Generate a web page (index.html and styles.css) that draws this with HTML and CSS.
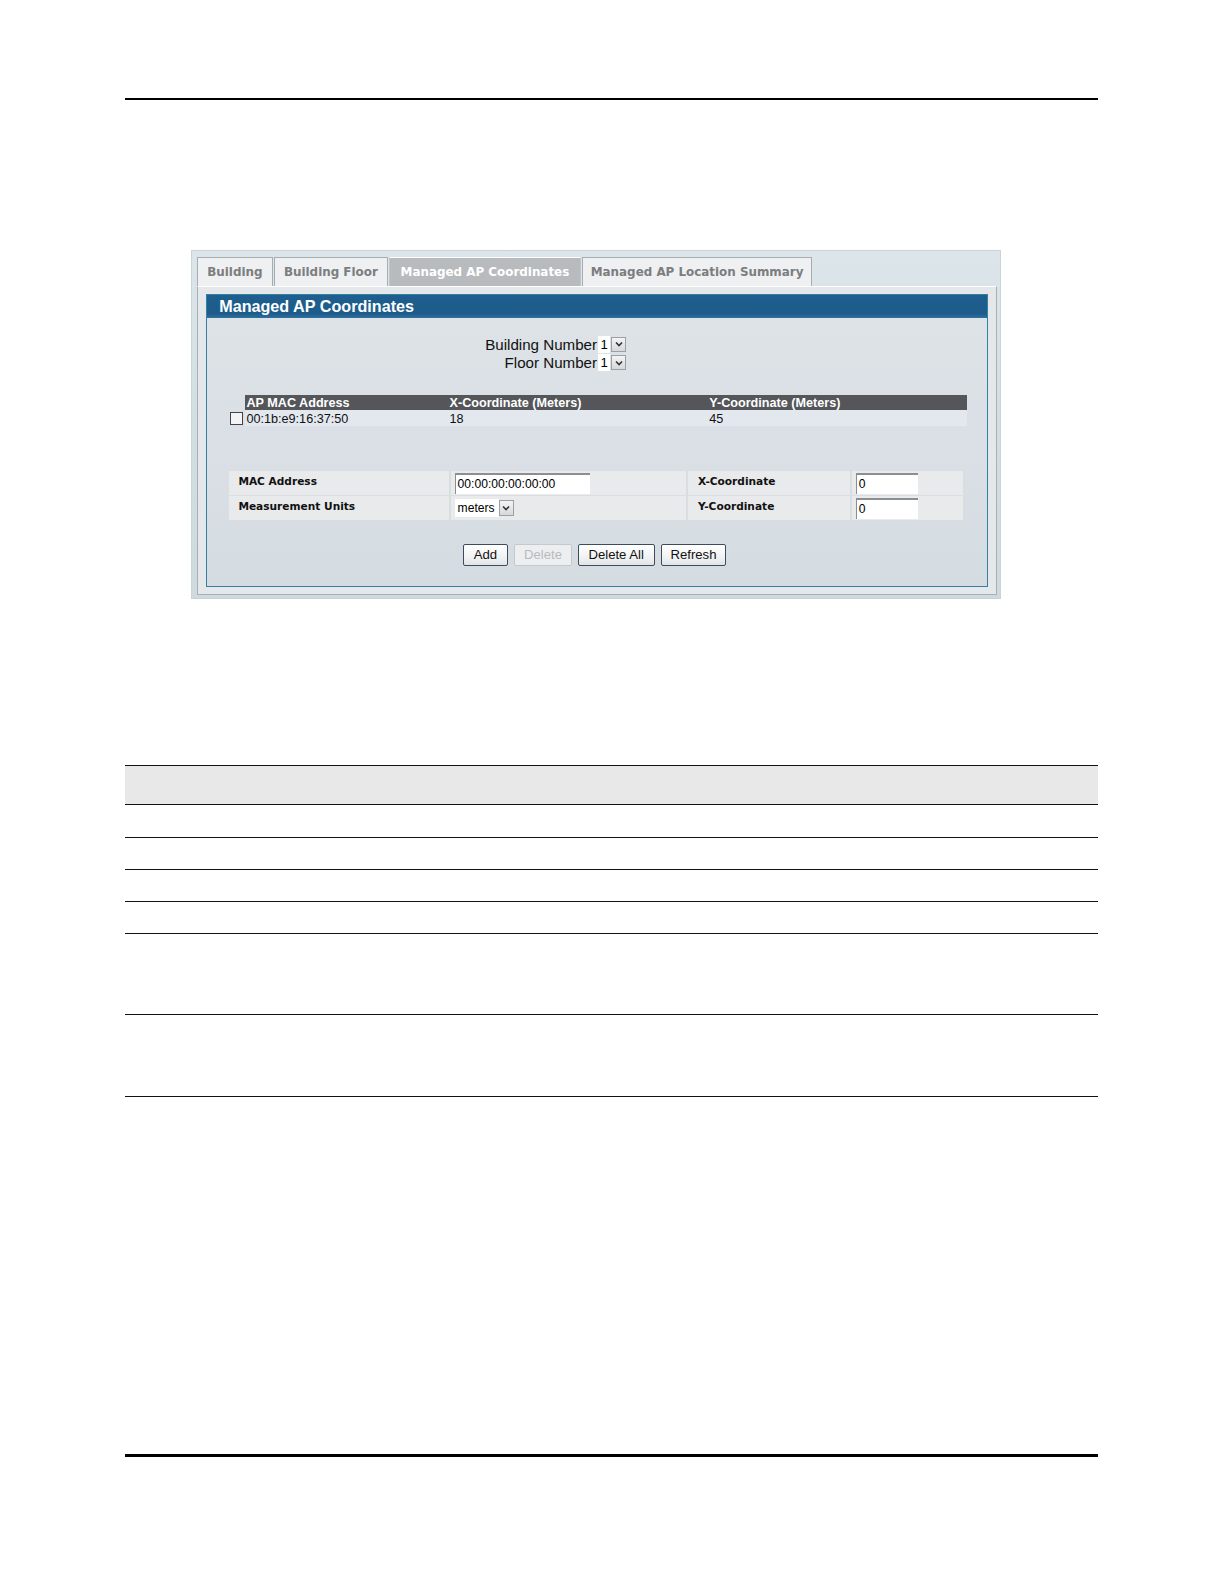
FILE: index.html
```html
<!DOCTYPE html>
<html>
<head>
<meta charset="utf-8">
<link rel="stylesheet" href="styles.css">
</head>
<body>
<div class="page">
  <div class="rule-top"></div>

  <div class="shot">
    <div class="tabs">
      <div class="tab t1">Building</div>
      <div class="tab t2">Building Floor</div>
      <div class="tab t3 active">Managed AP Coordinates</div>
      <div class="tab t4">Managed AP Location Summary</div>
    </div>
    <div class="content">
      <div class="panel">
        <div class="panel-head">Managed AP Coordinates</div>
        <div class="sel-rows">
          <div class="sel-row"><span class="sel-label">Building Number</span><span class="sel"><span class="sel-val">1</span><span class="arrow"><svg width="8" height="6" viewBox="0 0 8 6"><path d="M1 1.5 L4 4.5 L7 1.5" fill="none" stroke="#333" stroke-width="1.6"/></svg></span></span></div>
          <div class="sel-row"><span class="sel-label">Floor Number</span><span class="sel"><span class="sel-val">1</span><span class="arrow"><svg width="8" height="6" viewBox="0 0 8 6"><path d="M1 1.5 L4 4.5 L7 1.5" fill="none" stroke="#333" stroke-width="1.6"/></svg></span></span></div>
        </div>

        <div class="ap-table">
          <div class="ap-head blank"></div>
          <div class="ap-head">AP MAC Address</div>
          <div class="ap-head">X-Coordinate (Meters)</div>
          <div class="ap-head">Y-Coordinate (Meters)</div>
          <div class="ap-cell chk"><span class="checkbox"></span></div>
          <div class="ap-cell">00:1b:e9:16:37:50</div>
          <div class="ap-cell">18</div>
          <div class="ap-cell">45</div>
        </div>

        <div class="form">
          <div class="f-label">MAC Address</div>
          <div class="f-input"><span class="textbox wide">00:00:00:00:00:00</span></div>
          <div class="f-label right">X-Coordinate</div>
          <div class="f-input"><span class="textbox narrow">0</span></div>
          <div class="f-label">Measurement Units</div>
          <div class="f-input"><span class="unit-sel"><span class="unit-val">meters</span><span class="arrow small"><svg width="8" height="6" viewBox="0 0 8 6"><path d="M1 1.5 L4 4.5 L7 1.5" fill="none" stroke="#333" stroke-width="1.6"/></svg></span></span></div>
          <div class="f-label right">Y-Coordinate</div>
          <div class="f-input"><span class="textbox narrow">0</span></div>
        </div>

        <div class="buttons">
          <span class="btn b-add">Add</span>
          <span class="btn b-del disabled">Delete</span>
          <span class="btn b-delall">Delete All</span>
          <span class="btn b-ref">Refresh</span>
        </div>
      </div>
    </div>
  </div>

  <div class="doc-table">
    <div class="dt-head"></div>
    <div class="dt-row r32"></div>
    <div class="dt-row r32"></div>
    <div class="dt-row r32"></div>
    <div class="dt-row r31"></div>
    <div class="dt-row r81"></div>
    <div class="dt-row r81"></div>
  </div>

  <div class="rule-bottom"></div>
</div>
</body>
</html>
```

FILE: styles.css
```css
* { box-sizing: border-box; }
html, body { margin: 0; padding: 0; background: #fff; }
body { font-family: "Liberation Sans", Arial, sans-serif; color: #000; }

.page { padding-top: 97px; zoom: 1.0104; }

.rule-top { margin-left: 124px; width: 963px; height: 2px; background: #000; }

/* embedded UI screenshot */
.shot {
  margin-top: 148px;
  margin-left: 189px;
  width: 802px;
  height: 346px;
  background: linear-gradient(180deg, #dce6ea 0%, #d3dee3 50%, #cfdade 100%);
  border: 1px solid #c8d3d8;
  padding: 6px 0 0 5px;
}

.tabs { display: flex; height: 29px; align-items: stretch; }
.tab {
  height: 29px;
  border: 1px solid #a7aeb2;
  border-bottom: none;
  background: #eef0f1;
  color: #7b7d7f;
  font-family: "DejaVu Sans", Verdana, sans-serif;
  font-weight: bold;
  font-size: 11.8px;
  display: flex;
  align-items: center;
  justify-content: center;
  margin-right: 1px;
}
.t1 { width: 75px; }
.t2 { width: 113px; }
.t3 { width: 190px; }
.t4 { width: 228px; }
.tab.active { background: #b7bbbe; color: #fff; border-color: #c2c6c8; border-top-color: #fff; }

.content {
  width: 792px;
  height: 306px;
  border: 1px solid #a9b0b4;
  border-top: 1px solid #fff;
  background: #e4e8ea;
  padding: 7px 0 0 8px;
}

.panel {
  width: 774px;
  height: 290px;
  border: 1px solid #34809f;
  background: linear-gradient(180deg, #dde3e7 0%, #d9dfe4 60%, #d5dce1 100%);
}

.panel-head {
  height: 23px;
  background: linear-gradient(180deg, #1e5f8f 0%, #1c5b8a 80%, #2e6f9c 100%);
  color: #fff;
  font-weight: bold;
  font-size: 16px;
  line-height: 23px;
  padding-left: 12px;
}

.sel-rows { padding-top: 17px; }
.sel-row { display: flex; align-items: center; height: 18px; }
.sel-label { width: 386px; text-align: right; font-size: 15px; color: #111; }
.sel { display: flex; align-items: center; margin-left: 1px; }
.sel-val { background: #fff; width: 12px; height: 17px; font-size: 13px; line-height: 17px; text-align: center; }
.arrow {
  width: 15px; height: 15px;
  border: 1px solid #9aa0a4;
  background: linear-gradient(180deg, #f4f4f4, #d6d8da);
  display: flex; align-items: center; justify-content: center;
  margin-left: 1px;
}

.ap-table {
  margin-top: 23px;
  margin-left: 23px;
  width: 729px;
  display: grid;
  grid-template-columns: 15px 201px 257px 256px;
}
.ap-head {
  background: #545659;
  color: #fff;
  font-weight: bold;
  font-size: 12.5px;
  height: 15px;
  line-height: 16px;
  padding-left: 1px;
}
.ap-head.blank { background: transparent; }
.ap-cell { font-size: 12.5px; height: 16px; line-height: 15px; padding: 2px 0 0 1px; color: #111; background: #e2e8ee; }
.ap-cell.chk { background: transparent; padding: 2px 0 0 0; }
.checkbox { display: block; width: 13px; height: 13px; border: 1px solid #444; background: #f2f4f6; }

.form {
  margin-top: 44px;
  margin-left: 22px;
  width: 728px;
  display: grid;
  grid-template-columns: 219px 235px 162px 112px;
  row-gap: 1px;
}
.f-label, .f-input {
  height: 24px;
  background: #e8eaeb;
  border-right: 2px solid #d8dde0;
}
.f-label {
  font-family: "DejaVu Sans", Verdana, sans-serif;
  font-weight: bold;
  font-size: 10.5px;
  padding: 4px 0 0 9px;
  color: #111;
}
.f-label.right { padding-left: 10px; }
.f-input { padding: 2px 0 0 4px; }
.textbox {
  display: block;
  height: 21px;
  background: #fff;
  border-top: 2px solid #8b8f92;
  border-left: 1px solid #8b8f92;
  font-size: 12px;
  line-height: 19px;
  padding-left: 2px;
}
.textbox.wide { width: 134px; }
.textbox.narrow { width: 62px; }
.unit-sel { display: flex; align-items: center; padding-top: 1px; }
.unit-val { background: #fff; font-size: 12px; height: 18px; line-height: 18px; padding: 0 4px 0 3px; }
.arrow.small { width: 15px; height: 15px; margin-left: 0; }

.buttons {
  margin-top: 24px;
  margin-left: 253px;
  display: flex;
  gap: 6px;
}
.btn {
  height: 21px;
  border: 1px solid #3c4c5c;
  border-radius: 2px;
  background: linear-gradient(180deg, #ffffff 0%, #f1f2f3 60%, #e1e4e6 100%);
  font-size: 13px;
  line-height: 19px;
  text-align: center;
  color: #111;
}
.b-add { width: 45px; }
.b-del { width: 57px; }
.b-delall { width: 76px; }
.b-ref { width: 65px; }
.btn.disabled { border-color: #c6c9cb; color: #b8bbbd; background: #eceef0; }

/* empty document table */
.doc-table { margin-top: 164px; margin-left: 124px; width: 963px; }
.dt-head { height: 40px; background: #e8e8e8; border-top: 1px solid #111; border-bottom: 1px solid #111; }
.dt-row { border-bottom: 1px solid #111; }
.r32 { height: 32px; }
.r31 { height: 31px; }
.r81 { height: 81px; }

.rule-bottom { margin-top: 353px; margin-left: 124px; width: 963px; height: 3px; background: #000; }
```
